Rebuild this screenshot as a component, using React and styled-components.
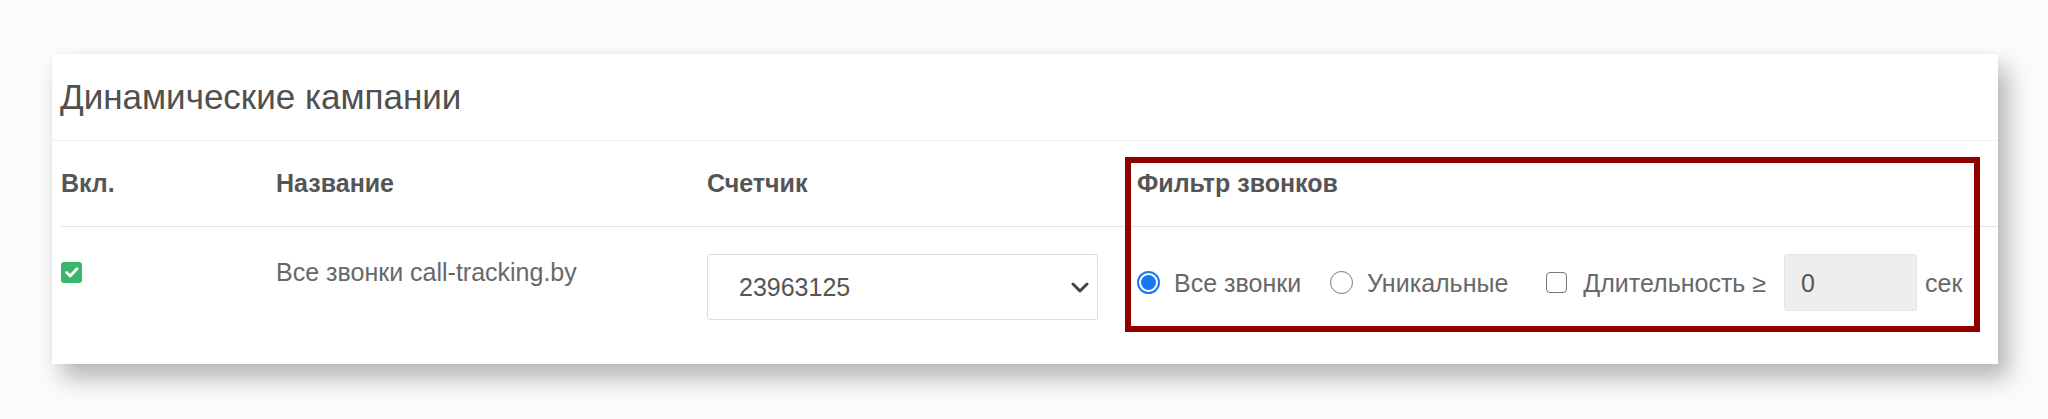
import React from "react";
import styled, { createGlobalStyle } from "styled-components";

const GlobalStyle = createGlobalStyle`
  html, body {
    margin: 0;
    padding: 0;
    background: #fbfbfb;
    font-family: "Liberation Sans", Arial, sans-serif;
  }
`;

const Page = styled.div`
  padding: 54px 0 0 52px;
  height: 365px;
`;

const Card = styled.div`
  width: 1946px;
  height: 310px;
  background: #fff;
  box-shadow: 10px 14px 22px rgba(0, 0, 0, 0.28), 0 0 4px rgba(0, 0, 0, 0.04);
`;

const Title = styled.h4`
  margin: 0;
  height: 86px;
  padding-left: 8px;
  display: flex;
  align-items: center;
  font-size: 35px;
  font-weight: 400;
  color: #505050;
  border-bottom: 1px solid #efefef;
`;

const Table = styled.div`
  position: relative;
  margin-left: 9px;
`;

const Row = styled.div`
  display: grid;
  grid-template-columns: 215px 431px 430px 1fr;
  height: ${(p) => p.$height}px;
  border-bottom: ${(p) => (p.$divided ? "1px solid #e4e4e4" : "none")};
  align-items: ${(p) => (p.$head ? "center" : "start")};
  box-sizing: border-box;
`;

const HeadCell = styled.div`
  font-size: 25px;
  font-weight: 700;
  color: #555;
`;

const Cell = styled.div`
  padding-top: 27px;
  font-size: 25px;
  line-height: 36px;
  color: #686868;
`;

const Tick = styled.span`
  display: flex;
  align-items: center;
  justify-content: center;
  width: 21px;
  height: 21px;
  margin-top: 8px;
  border-radius: 3px;
  background: #3bb46c;
`;

const Select = styled.div`
  width: 391px;
  height: 66px;
  box-sizing: border-box;
  border: 1px solid #dedede;
  border-radius: 3px;
  padding: 0 8px 0 31px;
  display: flex;
  align-items: center;
  justify-content: space-between;
  font-size: 25px;
  color: #555;
`;

const Filters = styled.div`
  height: 57px;
  display: flex;
  align-items: center;
  font-size: 25px;
  color: #686868;
`;

const Option = styled.label`
  display: flex;
  align-items: center;
  gap: ${(p) => p.$gap}px;
  margin-right: ${(p) => p.$after}px;
`;

const Radio = styled.span`
  position: relative;
  width: 23px;
  height: 23px;
  box-sizing: border-box;
  border-radius: 50%;
  border: ${(p) => (p.$checked ? "2px solid #1877f2" : "1.5px solid #777")};

  &::after {
    content: "";
    display: ${(p) => (p.$checked ? "block" : "none")};
    position: absolute;
    inset: 2px;
    border-radius: 50%;
    background: #1877f2;
  }
`;

const Box = styled.span`
  width: 21px;
  height: 21px;
  box-sizing: border-box;
  border: 1.5px solid #777;
  border-radius: 4px;
`;

const NumberInput = styled.div`
  width: 133px;
  height: 57px;
  box-sizing: border-box;
  margin-right: 8px;
  padding-left: 16px;
  display: flex;
  align-items: center;
  background: #eeeeee;
  border: 1px solid #e4e4e4;
  border-radius: 3px;
  color: #555;
`;

const Highlight = styled.div`
  position: absolute;
  left: 1064px;
  top: 16px;
  width: 855px;
  height: 175px;
  box-sizing: border-box;
  border: 6px solid #8e0000;
  pointer-events: none;
`;

const Check = () => (
  <svg width="14" height="11" viewBox="0 0 14 11">
    <path d="M1.6 5.6 L5.2 9 L12 1.8" fill="none" stroke="#fff" strokeWidth="2.8" strokeLinecap="round" strokeLinejoin="round" />
  </svg>
);

const Chevron = () => (
  <svg width="18" height="11" viewBox="0 0 18 11">
    <path d="M2 2 L9 9 L16 2" fill="none" stroke="#444" strokeWidth="3" strokeLinecap="round" strokeLinejoin="round" />
  </svg>
);

export default function App() {
  return (
    <Page>
      <GlobalStyle />
      <Card>
        <Title>Динамические кампании</Title>
        <Table>
          <Row $head $divided $height={86}>
            <HeadCell>Вкл.</HeadCell>
            <HeadCell>Название</HeadCell>
            <HeadCell>Счетчик</HeadCell>
            <HeadCell>Фильтр звонков</HeadCell>
          </Row>
          <Row $height={137}>
            <Cell>
              <Tick>
                <Check />
              </Tick>
            </Cell>
            <Cell>Все звонки call-tracking.by</Cell>
            <Cell>
              <Select>
                23963125
                <Chevron />
              </Select>
            </Cell>
            <Cell>
              <Filters>
                <Option $gap={14} $after={29}>
                  <Radio $checked />
                  Все звонки
                </Option>
                <Option $gap={14} $after={38}>
                  <Radio />
                  Уникальные
                </Option>
                <Option $gap={16} $after={18}>
                  <Box />
                  Длительность ≥
                </Option>
                <NumberInput>0</NumberInput>
                сек
              </Filters>
            </Cell>
          </Row>
          <Highlight />
        </Table>
      </Card>
    </Page>
  );
}
